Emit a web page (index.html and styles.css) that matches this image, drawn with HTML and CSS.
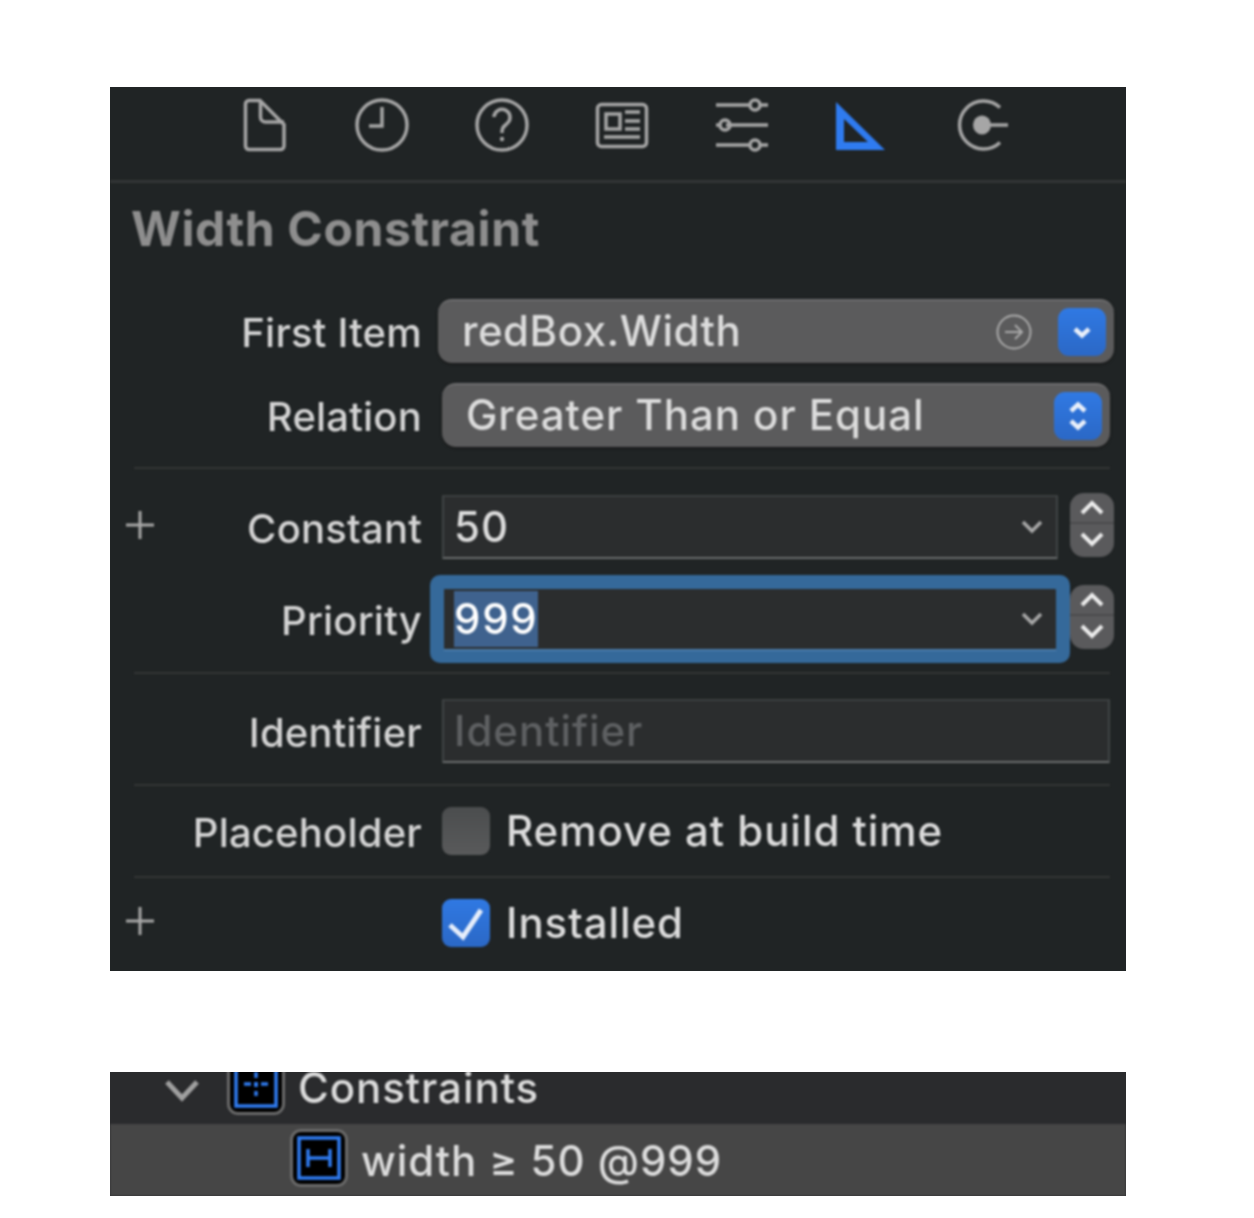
FILE: index.html
```html
<!DOCTYPE html>
<html lang="en">
<head>
<meta charset="utf-8">
<title>Width Constraint</title>
<link rel="stylesheet" href="styles.css">
</head>
<body>
<section class="panel inspector">
  <nav class="toolbar">
    <svg class="tool" viewBox="0 0 60 56"><path d="M17 3.500h11l24 24V49a3.500 3.500 0 0 1-3.500 3.500h-31.500a3.500 3.500 0 0 1-3.500-3.500V7a3.500 3.500 0 0 1 3.500-3.500z"/><path d="M28.500 4V20a5 5 0 0 0 5 5H52"/></svg>
    <svg class="tool" viewBox="0 0 60 56"><circle cx="30" cy="28" r="25"/><path d="M30 10V29H17"/></svg>
    <svg class="tool" viewBox="0 0 60 56"><circle cx="30" cy="28" r="25"/><path d="M22 20a8 8 0 1 1 13 6.500c-3 2.500-5 4-5 8V36"/><circle class="dot" cx="30" cy="42" r="2.200"/></svg>
    <svg class="tool" viewBox="0 0 60 56"><rect x="5.500" y="7.500" width="49" height="42" rx="4"/><rect x="14" y="17" width="14" height="15"/><path d="M33 15H48M33 24H48M33 32H48M12 40H48"/></svg>
    <svg class="tool" viewBox="0 0 60 56"><path d="M4 8H38M48 8H56M14 28H56M4 28H8M4 48H38M48 48H56"/><circle cx="43" cy="8" r="5"/><circle cx="13" cy="28" r="5"/><circle cx="43" cy="48" r="5"/></svg>
    <svg class="tool active" viewBox="0 0 60 56"><path fill-rule="evenodd" d="M4 5L53 53H4zM12 22V45H36z"/></svg>
    <svg class="tool" viewBox="0 0 60 56"><path d="M48 10.500A24 24 0 1 0 48 45.500M30 28H56"/><ellipse class="dot" cx="30" cy="28" rx="9" ry="9.500"/></svg>
  </nav>
  <h1 class="title">Width Constraint</h1>

  <div class="row">
    <div class="label-cell"><span class="label">First Item</span></div>
    <div class="control popup wide">
      <span class="value">redBox.Width</span>
      <svg class="go" viewBox="0 0 36 36"><circle cx="18" cy="18" r="16.500"/><path d="M9 18H26M19 11L26 18L19 25"/></svg>
      <span class="blue-btn"><svg class="btn-icon" viewBox="0 0 24 24"><path d="M5 9L12 15.500L19 9"/></svg></span>
    </div>
  </div>
  <div class="row second">
    <div class="label-cell"><span class="label">Relation</span></div>
    <div class="control popup inset">
      <span class="value">Greater Than or Equal</span>
      <span class="blue-btn"><svg class="btn-icon" viewBox="0 0 24 36"><path d="M5 13L12 6.500L19 13M5 23L12 29.500L19 23"/></svg></span>
    </div>
  </div>
  <hr class="divider after-relation">

  <div class="row">
    <div class="label-cell"><svg class="plus" viewBox="0 0 28 28"><path d="M14 0V28M0 14H28"/></svg><span class="label">Constant</span></div>
    <div class="control field">
      <span class="value">50</span>
      <svg class="drop" viewBox="0 0 24 16"><path d="M3 3L12 12L21 3"/></svg>
    </div>
    <div class="stepper">
      <span class="step"><svg viewBox="0 0 26 18"><path d="M3 14L13 4L23 14"/></svg></span>
      <span class="step"><svg viewBox="0 0 26 18"><path d="M3 4L13 14L23 4"/></svg></span>
    </div>
  </div>
  <div class="row priority">
    <div class="label-cell"><span class="label">Priority</span></div>
    <div class="control field focused">
      <span class="value selected">999</span>
      <svg class="drop" viewBox="0 0 24 16"><path d="M3 3L12 12L21 3"/></svg>
    </div>
    <div class="stepper">
      <span class="step"><svg viewBox="0 0 26 18"><path d="M3 14L13 4L23 14"/></svg></span>
      <span class="step"><svg viewBox="0 0 26 18"><path d="M3 4L13 14L23 4"/></svg></span>
    </div>
  </div>
  <hr class="divider after-priority">

  <div class="row">
    <div class="label-cell"><span class="label">Identifier</span></div>
    <div class="control field inset"><span class="value placeholder">Identifier</span></div>
  </div>
  <hr class="divider">

  <div class="row check-row">
    <div class="label-cell"><span class="label">Placeholder</span></div>
    <span class="check"></span>
    <span class="check-text">Remove at build time</span>
  </div>
  <hr class="divider">

  <div class="row check-row">
    <div class="label-cell"><svg class="plus" viewBox="0 0 28 28"><path d="M14 0V28M0 14H28"/></svg></div>
    <span class="check on"><svg viewBox="0 0 48 48"><path d="M8 26L21 38L39 11"/></svg></span>
    <span class="check-text">Installed</span>
  </div>
</section>

<section class="panel outline">
  <div class="tree-row parent">
    <svg class="disclosure" viewBox="0 0 36 24"><path d="M3 4L18 20L33 4"/></svg>
    <span class="badge"><svg viewBox="0 0 44 44"><rect x="2" y="2" width="40" height="40"/><path d="M22 8V14M22 18V23M22 27V32M10 20H17M20 20H24M27 20H34"/></svg></span>
    <span class="tree-text">Constraints</span>
  </div>
  <div class="tree-row child">
    <span class="badge"><svg viewBox="0 0 44 44"><rect x="2" y="2" width="40" height="40"/><path d="M11 13V31M33 13V31M11 22H33"/></svg></span>
    <span class="tree-text">width ≥ 50 @999</span>
  </div>
</section>
</body>
</html>
```

FILE: styles.css
```css
* { box-sizing: border-box; }

html, body { margin: 0; background: #fff; }

body {
  padding: 87px 128px 0 110px;
  font-family: Inter, "Liberation Sans", sans-serif;
}

.panel {
  width: 1016px;
  overflow: hidden;
}

.panel > * { filter: blur(0.8px); }

.inspector {
  height: 884px;
  background: #202425;
}

.toolbar {
  display: flex;
  gap: 60px;
  height: 96px;
  padding: 10px 0 0 122px;
  border-bottom: 3px solid #333536;
}

.tool {
  width: 60px;
  height: 56px;
  fill: none;
  stroke: #a6a6a6;
  stroke-width: 3.5;
}

.tool .dot { fill: #a6a6a6; stroke: none; }
.tool.active { fill: #2f7bf0; stroke: none; }

.title {
  height: 116px;
  margin: 0;
  padding: 19px 0 0 21px;
  color: #8e8e8e;
  font-size: 48px;
  line-height: 54px;
  font-weight: 700;
  letter-spacing: 0.6px;
}

.row {
  display: flex;
  height: 64px;
  padding-right: 12px;
}

.row.second { margin-top: 20px; }
.row.priority { margin-top: 28px; }

.label-cell {
  display: flex;
  flex: 0 0 312px;
  align-items: center;
  justify-content: flex-end;
}

.label {
  padding-top: 3px;
  color: #d4d4d4;
  font-size: 40px;
  font-weight: 500;
  letter-spacing: 0.2px;
}

.plus {
  width: 28px;
  height: 28px;
  margin: -4px auto 0 16px;
  fill: none;
  stroke: #a8a8a8;
  stroke-width: 3;
}

.control {
  display: flex;
  flex: 1;
  align-items: center;
  min-width: 0;
  margin-left: 20px;
}

.value {
  color: #dcdcdc;
  font-size: 42px;
  font-weight: 500;
  letter-spacing: 0.95px;
}

.popup {
  padding-left: 24px;
  border-top: 2px solid #6d6d6e;
  border-radius: 14px;
  background: #5b5b5c;
  box-shadow: 0 1px 2px #111;
}

.popup .value { flex: 1; margin-top: -4px; }
.popup.wide { margin-left: 16px; }
.popup.wide .value { letter-spacing: 0.5px; }
.inset { margin-right: 4px; }

.go {
  width: 36px;
  height: 36px;
  margin-right: 26px;
  fill: none;
  stroke: #a9a9a9;
  stroke-width: 2;
}

.blue-btn {
  display: flex;
  align-items: center;
  justify-content: center;
  width: 48px;
  height: 48px;
  margin-right: 8px;
  border-radius: 11px;
  background: linear-gradient(#3079e3, #2b68c6);
}

.btn-icon {
  width: 24px;
  height: 36px;
  fill: none;
  stroke: #eaf0fa;
  stroke-width: 4.5;
}

.field {
  padding-left: 10px;
  border: 2px solid #414445;
  border-top-color: #3c3f40;
  border-bottom-color: #6b6d6e;
  background: #2b2d2e;
}

.field .value { flex: 1; margin-top: -1px; }

.drop {
  width: 24px;
  height: 16px;
  margin-right: 12px;
  fill: none;
  stroke: #a8a8a8;
  stroke-width: 3.5;
}

.stepper {
  display: flex;
  flex-direction: column;
  flex: 0 0 44px;
  height: 64px;
  margin: -2px 0 0 12px;
  border-radius: 14px;
  background: #5a5a5c;
}

.step {
  display: flex;
  flex: 1;
  align-items: center;
  justify-content: center;
}

.step + .step {
  padding-bottom: 4px;
  border-top: 2px solid #4a4a4c;
}

.step svg {
  width: 26px;
  height: 18px;
  fill: none;
  stroke: #ececec;
  stroke-width: 4;
}

.focused {
  border-color: #35699a;
  border-bottom-color: #4a7cab;
  border-radius: 3px;
  box-shadow: 0 0 0 12px #35699a;
  background: #2b2d2e;
}

.field .selected {
  flex: none;
  margin: 0 auto 0 0;
  height: 56px;
  line-height: 56px;
  background: #3f628e;
  color: #fff;
  letter-spacing: 1.7px;
}

.field .placeholder { color: #5e6062; }

.divider {
  height: 2px;
  margin: 21px 16px 21px 24px;
  border: 0;
  background: #333536;
}

.after-relation { margin-top: 20px; margin-bottom: 26px; }
.after-priority { margin-bottom: 25px; }

.check-row {
  height: 48px;
  align-items: center;
}

.check {
  display: block;
  width: 48px;
  height: 48px;
  margin-left: 20px;
  border-radius: 9px;
  background: linear-gradient(#4b4d4e, #595a5b);
}

.check.on { background: linear-gradient(#3079e3, #2b68c6); }

.check svg {
  display: block;
  fill: none;
  stroke: #e6eefb;
  stroke-width: 5;
}

.check-text {
  margin: -2px 0 0 16px;
  color: #dcdcdc;
  font-size: 42px;
  font-weight: 500;
  letter-spacing: 0.95px;
}

.outline {
  height: 124px;
  margin-top: 101px;
  background: #2a2b2d;
}

.tree-row {
  display: flex;
  align-items: flex-start;
}

.parent {
  height: 52px;
}

.disclosure {
  width: 36px;
  height: 24px;
  margin: 6px 0 0 54px;
  fill: none;
  stroke: #a0a0a0;
  stroke-width: 5;
}

.badge {
  display: flex;
  align-items: center;
  justify-content: center;
  flex: none;
  width: 58px;
  height: 58px;
  border: 3px solid #6a6a6a;
  border-radius: 11px;
  background: #000;
}

.parent .badge { margin: -15px 0 0 27px; }
.child .badge { margin: 5px 0 0 180px; }

.badge svg {
  width: 44px;
  height: 44px;
  fill: none;
  stroke: #2f7bf0;
  stroke-width: 3.5;
}

.child {
  height: 72px;
  background: #464646;
}

.tree-text {
  color: #dcdcdc;
  font-size: 42px;
  font-weight: 500;
  line-height: 50px;
  letter-spacing: 0.95px;
}

.parent .tree-text { margin: -9px 0 0 13px; }
.child .tree-text { margin: 12px 0 0 13px; }
```
